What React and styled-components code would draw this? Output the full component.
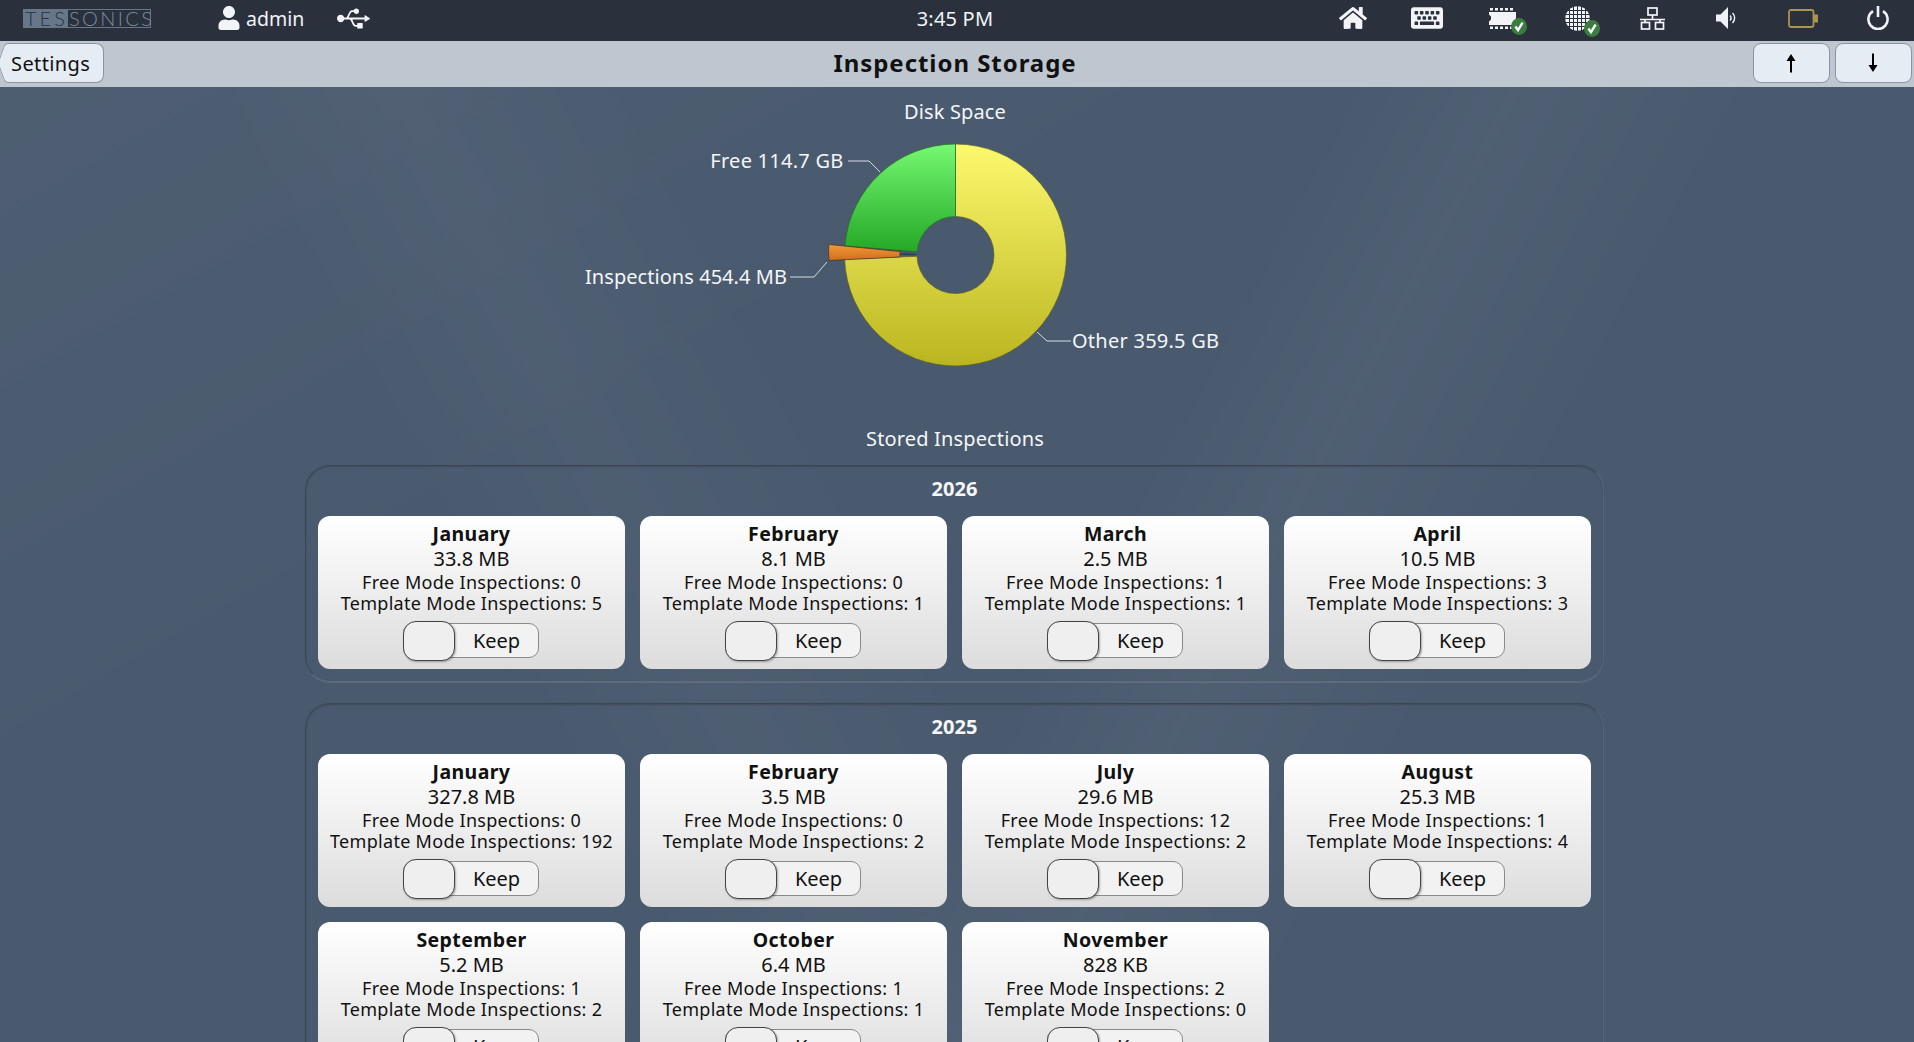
import styled, { createGlobalStyle } from "styled-components";
import { FaHome, FaKeyboard, FaUsb, FaUser } from "react-icons/fa";

const GlobalStyle = createGlobalStyle`
    html, body {
        margin: 0;
        padding: 0;
        height: 100%;
        overflow: hidden;
        background: #4a5a6e;
    }
    * {
        box-sizing: border-box;
    }
`;

const FONT = `"Noto Sans", "DejaVu Sans", sans-serif`;

const Page = styled.div`
    width: 1914px;
    height: 1042px;
    overflow: hidden;
    display: flex;
    flex-direction: column;
    font-family: ${FONT};
`;

const TopBar = styled.div`
    display: grid;
    grid-template-columns: 1fr auto 1fr;
    align-items: center;
    flex: none;
    height: 41px;
    padding-bottom: 5px;
    background: #2a313d;
    color: #f2f4f8;
`;

const TopLeft = styled.div`
    display: flex;
    align-items: center;
    padding-left: 23px;
`;

const TopRight = styled.div`
    display: flex;
    align-items: center;
    justify-content: flex-end;
    padding-right: 25px;
`;

const Clock = styled.div`
    font-size: 20px;
    letter-spacing: 0.2px;
    padding-right: 4px;
`;

const Logo = styled.div`
    display: flex;
    align-items: center;
    width: 128px;
    height: 19px;
    border: 1px solid #66778a;
    font-family: "Lato", sans-serif;
    font-weight: 300;
    font-size: 20px;
    line-height: 17px;
    white-space: nowrap;
`;

const LogoFilled = styled.span`
    display: block;
    width: 47px;
    height: 100%;
    padding-left: 1px;
    background: #66778a;
    color: #2a313d;
    letter-spacing: 3px;
`;

const LogoOutline = styled.span`
    display: block;
    padding-left: 1px;
    color: #7d8c9d;
    letter-spacing: 2.4px;
`;

const UserName = styled.span`
    font-size: 19.5px;
    margin-left: 5px;
    margin-right: 33px;
`;

const BarIcon = styled.div`
    display: flex;
    position: relative;
    margin-left: ${(props) => props.$gap || 0}px;
    margin-top: ${(props) => props.$top || 0}px;
    color: #f2f4f8;
`;

const CheckBadge = styled.svg`
    position: absolute;
    right: -${(props) => props.$right}px;
    bottom: -6px;
`;

const Toolbar = styled.div`
    position: relative;
    display: flex;
    align-items: flex-start;
    justify-content: space-between;
    flex: none;
    height: 46px;
    padding: 2px 2px 0 0;
    background: #bec6d0;
`;

const BackButton = styled.div`
    position: relative;
    display: flex;
    align-items: center;
    width: 96px;
    height: 40px;
    margin-left: 8px;
    padding-left: 3px;
    background: #e6ecf4;
    border: 1px solid #8d949e;
    border-left: none;
    border-radius: 0 8px 8px 0;

    &::before,
    &::after {
        content: "";
        position: absolute;
        left: -7px;
        width: 14px;
        height: 20px;
        background: #e6ecf4;
        border-left: 1px solid #8d949e;
    }
    &::before {
        top: -1px;
        border-top: 1px solid #8d949e;
        border-radius: 4px 0 0 0;
        transform: skewX(-20deg);
    }
    &::after {
        bottom: -1px;
        border-bottom: 1px solid #8d949e;
        border-radius: 0 0 0 4px;
        transform: skewX(20deg);
    }
`;

const BackLabel = styled.span`
    position: relative;
    z-index: 1;
    font-size: 20px;
    letter-spacing: 0.4px;
    color: #111;
`;

const ToolbarTitle = styled.div`
    position: absolute;
    left: 0;
    right: 4px;
    top: 7px;
    text-align: center;
    font-size: 24px;
    line-height: 30px;
    font-weight: 700;
    color: #111;
    letter-spacing: 0.95px;
`;

const ButtonGroup = styled.div`
    display: flex;
    gap: 5px;
`;

const ArrowButton = styled.div`
    display: flex;
    align-items: center;
    justify-content: center;
    width: 77px;
    height: 40px;
    padding-right: 2px;
    background: #e6ecf4;
    border: 1px solid #8d949e;
    border-radius: 8px;
`;

const Content = styled.div`
    flex: 1;
    display: flex;
    flex-direction: column;
    align-items: center;
    padding: 13px 4px 0 0;
    background:
        linear-gradient(118deg, transparent 55%, rgba(255, 255, 255, 0.03) 62%, transparent 72%),
        linear-gradient(62deg, transparent 30%, rgba(255, 255, 255, 0.025) 38%, transparent 48%),
        linear-gradient(150deg, rgba(255, 255, 255, 0.025), transparent 35%),
        #4a5a6e;
    color: #f4f6f9;
`;

const SectionTitle = styled.div`
    font-size: 20px;
    line-height: 24px;
    letter-spacing: 0.15px;
    text-align: center;
    margin-top: ${(props) => props.$top || 0}px;
`;

const Chart = styled.svg`
    display: block;
    flex: none;
    margin-top: 6px;
    width: 800px;
    height: 240px;
`;

const ChartLabel = styled.text`
    font-family: ${FONT};
    font-size: 20px;
    letter-spacing: ${(props) => props.$spacing || 0.25}px;
    fill: #f4f6f9;
    dominant-baseline: central;
`;

const YearPanel = styled.div`
    flex: none;
    width: 1299px;
    margin-top: ${(props) => props.$top}px;
    margin-right: 1px;
    padding: 12px 12px 12px;
    border: 1px solid #394656;
    border-bottom-color: #5d6b7d;
    border-right-color: #566477;
    border-radius: 25px;
    box-shadow:
        0 1px 0 rgba(255, 255, 255, 0.1),
        inset 0 1px 2px rgba(0, 0, 0, 0.18);
`;

const YearTitle = styled.div`
    font-size: 20px;
    font-weight: 700;
    line-height: 22px;
    text-align: center;
    margin-bottom: 16px;
`;

const CardGrid = styled.div`
    display: grid;
    grid-template-columns: repeat(4, 307px);
    gap: 15px;
`;

const Card = styled.div`
    display: flex;
    flex-direction: column;
    align-items: center;
    height: 153px;
    padding-top: 6px;
    background: linear-gradient(#ffffff, #dcdcdc);
    border-radius: 12px;
    color: #111;
`;

const CardMonth = styled.div`
    font-size: 19.5px;
    font-weight: 700;
    letter-spacing: 0.4px;
    line-height: 24px;
`;

const CardSize = styled.div`
    font-size: 20px;
    line-height: 26px;
`;

const CardLine = styled.div`
    font-size: 18px;
    letter-spacing: 0.3px;
    line-height: 21px;
`;

const Switch = styled.div`
    display: flex;
    align-items: center;
    width: 136px;
    height: 35px;
    margin: 9px 1px 0 0;
    background: #f2f2f2;
    border: 1px solid #8a8a8a;
    border-radius: 10px;
`;

const SwitchThumb = styled.div`
    flex: none;
    width: 52px;
    height: 40px;
    margin-left: -1px;
    background: #efefef;
    border: 1px solid #444;
    border-radius: 13px;
    box-shadow: 1px 1px 2px rgba(0, 0, 0, 0.3);
`;

const SwitchLabel = styled.div`
    flex: 1;
    text-align: center;
    font-size: 20px;
`;

const STORED = [
    {
        year: "2026",
        top: 14,
        months: [
            ["January", "33.8 MB", 0, 5],
            ["February", "8.1 MB", 0, 1],
            ["March", "2.5 MB", 1, 1],
            ["April", "10.5 MB", 3, 3],
        ],
    },
    {
        year: "2025",
        top: 21,
        months: [
            ["January", "327.8 MB", 0, 192],
            ["February", "3.5 MB", 0, 2],
            ["July", "29.6 MB", 12, 2],
            ["August", "25.3 MB", 1, 4],
            ["September", "5.2 MB", 1, 2],
            ["October", "6.4 MB", 1, 1],
            ["November", "828 KB", 2, 0],
        ],
    },
];

// angle in degrees, clockwise from 12 o'clock
function polar(cx, cy, r, deg) {
    const a = ((deg - 90) * Math.PI) / 180;
    return [cx + r * Math.cos(a), cy + r * Math.sin(a)];
}

function ringSlice(cx, cy, r, hole, from, to) {
    const [x1, y1] = polar(cx, cy, r, from);
    const [x2, y2] = polar(cx, cy, r, to);
    const [x3, y3] = polar(cx, cy, hole, to);
    const [x4, y4] = polar(cx, cy, hole, from);
    const large = to - from > 180 ? 1 : 0;
    return `M${x1} ${y1}A${r} ${r} 0 ${large} 1 ${x2} ${y2}L${x3} ${y3}A${hole} ${hole} 0 ${large} 0 ${x4} ${y4}Z`;
}

function Check({ right }) {
    return (
        <CheckBadge $right={right} width="16" height="17" viewBox="0 0 16 17">
            <ellipse cx="8" cy="8.5" rx="8" ry="8.5" fill="#3b7d3f" />
            <path d="M4.4 8.5l2.6 3.6 4.6-7.4" fill="none" stroke="#fff" strokeWidth="2.4" />
        </CheckBadge>
    );
}

function FilmIcon() {
    return (
        <svg width="27" height="21" viewBox="0 0 27 21" fill="#f2f4f8">
            {[1, 6, 11, 16, 21].map((x) => (
                <g key={x}>
                    <rect x={x} y="0" width="3" height="2.5" />
                    <rect x={x} y="18.5" width="3" height="2.5" />
                </g>
            ))}
            <path d="M0 4h27v13H0v-3.5l2-2v-3l-2-2z" />
        </svg>
    );
}

function GlobeIcon() {
    const lines = [4, 8, 12, 16, 20];
    return (
        <svg width="25" height="25" viewBox="0 0 25 25">
            <circle cx="12.5" cy="12.5" r="12.2" fill="#f2f4f8" />
            {lines.map((p) => (
                <g key={p} stroke="#2a313d" strokeWidth="1">
                    <line x1={p + 0.5} y1="0" x2={p + 0.5} y2="25" />
                    <line x1="0" y1={p + 0.5} x2="25" y2={p + 0.5} />
                </g>
            ))}
        </svg>
    );
}

function NetworkIcon() {
    return (
        <svg width="25" height="23" viewBox="0 0 25 23" fill="none" stroke="#f2f4f8" strokeWidth="1.7">
            <rect x="8" y="1" width="9" height="7" />
            <path d="M12.5 8v4M0 12.5h25M5 12.5v3M20 12.5v3" />
            <rect x="1.5" y="15.5" width="8" height="6.5" />
            <rect x="15.5" y="15.5" width="8" height="6.5" />
        </svg>
    );
}

function VolumeIcon() {
    return (
        <svg width="20" height="22" viewBox="0 0 20 22" fill="none">
            <path d="M0 7.5h4.5L12 0v22l-7.5-7.5H0z" fill="#eef2f8" />
            <path d="M14 8.5a3.5 3.5 0 010 5M16.5 6a7 7 0 010 10" stroke="#eef2f8" strokeWidth="1.5" />
        </svg>
    );
}

function BatteryIcon() {
    return (
        <svg width="30" height="19" viewBox="0 0 30 19" fill="none">
            <rect x="1" y="1" width="24.5" height="17" rx="2" stroke="#ab9350" strokeWidth="1.8" />
            <rect x="26" y="5.5" width="4" height="8" fill="#ab9350" />
        </svg>
    );
}

function PowerIcon() {
    return (
        <svg width="22" height="24" viewBox="0 0 22 24" fill="none" stroke="#f2f4f8" strokeWidth="2.6">
            <path d="M11 0v11" />
            <path d="M6 5.2a9.6 9.6 0 1010 0" />
        </svg>
    );
}

function ArrowIcon({ down }) {
    return (
        <svg width="12" height="20" viewBox="0 0 12 20" style={down ? { transform: "rotate(180deg)" } : undefined}>
            <path d="M6 1l4.5 7h-3.5v11.5h-2v-11.5h-3.5z" fill="#000" />
        </svg>
    );
}

function DiskChart() {
    const cx = 955.5;
    const cy = 255;
    return (
        <Chart viewBox="555 130 800 240">
            <defs>
                <linearGradient id="other" x1="0" y1="0" x2="0" y2="1">
                    <stop offset="0" stopColor="#fdf96e" />
                    <stop offset="1" stopColor="#bab51f" />
                </linearGradient>
                <linearGradient id="free" x1="0" y1="0" x2="0" y2="1">
                    <stop offset="0" stopColor="#76f872" />
                    <stop offset="1" stopColor="#24a826" />
                </linearGradient>
                <linearGradient id="slice" x1="0" y1="0" x2="0" y2="1">
                    <stop offset="0" stopColor="#f39a35" />
                    <stop offset="1" stopColor="#cf6d1f" />
                </linearGradient>
            </defs>
            <path d={ringSlice(cx, cy, 111, 38.5, 0, 268)} fill="url(#other)" stroke="#5d5f25" strokeWidth="0.7" />
            <path d={ringSlice(cx, cy, 111, 38.5, 274.7, 360)} fill="url(#free)" stroke="#1f6d28" strokeWidth="0.7" />
            <path d="M829 244.5L900 251.5V257L829 260.5Q828 252 829 244.5Z" fill="url(#slice)" stroke="#463a2a" strokeWidth="0.8" />
            <path d="M900 254L916 254.5" stroke="#2b4150" strokeWidth="1.5" />
            <g fill="none" stroke="#d5dbe2" strokeWidth="1">
                <path d="M848 161H869L880 172" />
                <path d="M790 277H814L827 262" />
                <path d="M1071 341H1047L1037 332" />
            </g>
            <ChartLabel x="843.5" y="160" textAnchor="end">Free 114.7 GB</ChartLabel>
            <ChartLabel x="787" y="276" textAnchor="end" $spacing={0.05}>Inspections 454.4 MB</ChartLabel>
            <ChartLabel x="1072" y="340">Other 359.5 GB</ChartLabel>
        </Chart>
    );
}

function MonthCard({ month, size, free, template }) {
    return (
        <Card>
            <CardMonth>{month}</CardMonth>
            <CardSize>{size}</CardSize>
            <CardLine>Free Mode Inspections: {free}</CardLine>
            <CardLine>Template Mode Inspections: {template}</CardLine>
            <Switch>
                <SwitchThumb />
                <SwitchLabel>Keep</SwitchLabel>
            </Switch>
        </Card>
    );
}

function App() {
    return (
        <Page>
            <GlobalStyle />
            <TopBar>
                <TopLeft>
                    <Logo>
                        <LogoFilled>TES</LogoFilled>
                        <LogoOutline>SONICS</LogoOutline>
                    </Logo>
                    <BarIcon $gap={66}>
                        <FaUser size={24} />
                    </BarIcon>
                    <UserName>admin</UserName>
                    <BarIcon>
                        <FaUsb size={33} />
                    </BarIcon>
                </TopLeft>
                <Clock>3:45 PM</Clock>
                <TopRight>
                    <BarIcon>
                        <FaHome size={28} />
                    </BarIcon>
                    <BarIcon $gap={44}>
                        <FaKeyboard size={32} />
                    </BarIcon>
                    <BarIcon $gap={46} $top={1}>
                        <FilmIcon />
                        <Check right={11} />
                    </BarIcon>
                    <BarIcon $gap={49}>
                        <GlobeIcon />
                        <Check right={10} />
                    </BarIcon>
                    <BarIcon $gap={50}>
                        <NetworkIcon />
                    </BarIcon>
                    <BarIcon $gap={51}>
                        <VolumeIcon />
                    </BarIcon>
                    <BarIcon $gap={52}>
                        <BatteryIcon />
                    </BarIcon>
                    <BarIcon $gap={49}>
                        <PowerIcon />
                    </BarIcon>
                </TopRight>
            </TopBar>
            <Toolbar>
                <BackButton>
                    <BackLabel>Settings</BackLabel>
                </BackButton>
                <ToolbarTitle>Inspection Storage</ToolbarTitle>
                <ButtonGroup>
                    <ArrowButton>
                        <ArrowIcon />
                    </ArrowButton>
                    <ArrowButton>
                        <ArrowIcon down />
                    </ArrowButton>
                </ButtonGroup>
            </Toolbar>
            <Content>
                <SectionTitle>Disk Space</SectionTitle>
                <DiskChart />
                <SectionTitle $top={57}>Stored Inspections</SectionTitle>
                {STORED.map((group) => (
                    <YearPanel key={group.year} $top={group.top}>
                        <YearTitle>{group.year}</YearTitle>
                        <CardGrid>
                            {group.months.map(([month, size, free, template]) => (
                                <MonthCard
                                    key={month}
                                    month={month}
                                    size={size}
                                    free={free}
                                    template={template}
                                />
                            ))}
                        </CardGrid>
                    </YearPanel>
                ))}
            </Content>
        </Page>
    );
}

export default App;
